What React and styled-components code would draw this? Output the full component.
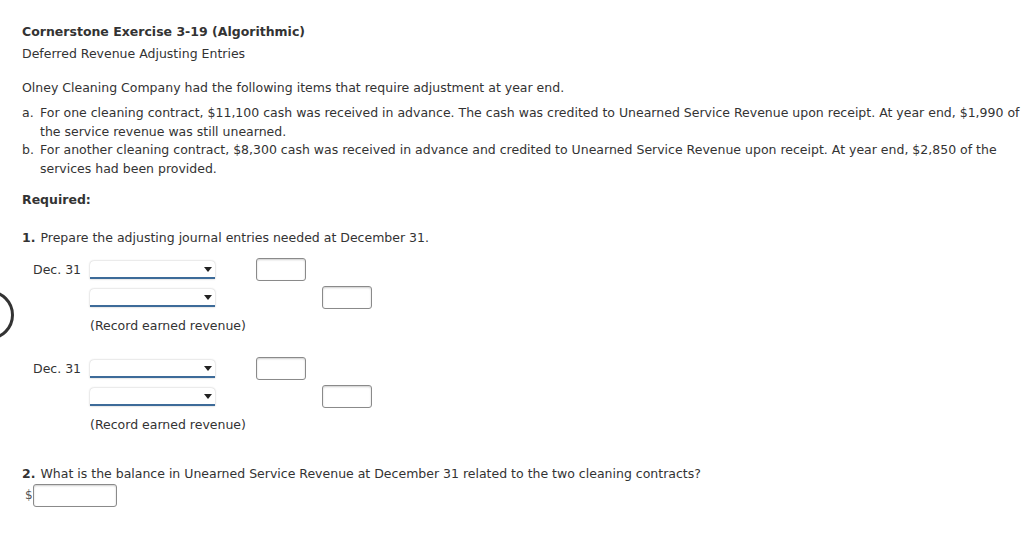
import React from 'react'
import styled, { createGlobalStyle } from 'styled-components'

const Global = createGlobalStyle`
  html, body {
    margin: 0;
    padding: 0;
    background: #fff;
  }
  body {
    font-family: Verdana, "DejaVu Sans", sans-serif;
    font-size: 12.5px;
    color: #333;
  }
`

const Page = styled.div`
  position: relative;
  width: 1024px;
  height: 541px;
  overflow: hidden;
  padding: 23px 0 0 22px;
  box-sizing: border-box;
`

const SideHandle = styled.div`
  position: absolute;
  left: -36px;
  top: 290px;
  width: 44px;
  height: 44px;
  border: 3px solid #333;
  border-radius: 50%;
`

const Title = styled.div`
  font-weight: bold;
  line-height: 18px;
`

const Subtitle = styled.div`
  line-height: 18px;
  margin-top: 4px;
`

const Para = styled.p`
  margin: 16px 0 0;
  line-height: 18px;
`

const List = styled.ol`
  list-style: none;
  margin: 7px 0 0;
  padding: 0;
  width: 1000px;
`

const Item = styled.li`
  display: flex;
  line-height: 18.7px;
`

const Marker = styled.span`
  flex: 0 0 18px;
`

const Body = styled.span`
  flex: 1;
`

const Required = styled.div`
  font-weight: bold;
  margin-top: 12px;
  line-height: 18px;
`

const Question = styled.div`
  margin-top: ${p => p.$top}px;
  line-height: 18px;
  b { margin-right: 5px; }
`

const Journal = styled.div`
  margin: ${p => p.$top}px 0 0 11px;
  display: grid;
  grid-template-columns: 57px 125px 41px 50px 16px 50px;
  grid-auto-rows: 28px;
  align-items: center;
`

const DateLabel = styled.span`
  grid-column: 1;
`

const SelectBox = styled.div`
  grid-column: 2;
  position: relative;
  height: 16px;
  background: #fff;
  border-radius: 4px 4px 0 0;
  box-shadow: 0 0 2px rgba(0, 0, 0, 0.3);
  border-bottom: 2px solid #3d6b99;
  &::after {
    content: '';
    position: absolute;
    right: 3px;
    top: 6px;
    border-left: 4px solid transparent;
    border-right: 4px solid transparent;
    border-top: 5px solid #222;
  }
`

const Amount = styled.div`
  grid-column: ${p => p.$col};
  width: ${p => p.$w || 50}px;
  height: 23px;
  box-sizing: border-box;
  border: 1px solid #8a8a8a;
  border-radius: 3px;
  box-shadow: inset 0 1px 2px rgba(0, 0, 0, 0.2);
  background: #fff;
`

const Note = styled.span`
  grid-column: 2 / span 5;
`

const DollarRow = styled.div`
  display: flex;
  align-items: center;
  margin: 1px 0 0 3px;
`

const Dollar = styled.span`
  width: 8px;
  font-size: 12px;
  color: #555;
`

const Entry = ({ top }) => (
  <Journal $top={top}>
    <DateLabel>Dec. 31</DateLabel>
    <SelectBox />
    <span />
    <Amount $col={4} />
    <span />
    <span />
    <span />
    <SelectBox />
    <span />
    <span />
    <span />
    <Amount $col={6} />
    <span />
    <Note>(Record earned revenue)</Note>
  </Journal>
)

export default function App () {
  return (
    <Page>
      <Global />
      <SideHandle />
      <Title>Cornerstone Exercise 3-19 (Algorithmic)</Title>
      <Subtitle>Deferred Revenue Adjusting Entries</Subtitle>
      <Para>Olney Cleaning Company had the following items that require adjustment at year end.</Para>
      <List>
        <Item>
          <Marker>a.</Marker>
          <Body>For one cleaning contract, $11,100 cash was received in advance. The cash was credited to Unearned Service Revenue upon receipt. At year end, $1,990 of the service revenue was still unearned.</Body>
        </Item>
        <Item>
          <Marker>b.</Marker>
          <Body>For another cleaning contract, $8,300 cash was received in advance and credited to Unearned Service Revenue upon receipt. At year end, $2,850 of the services had been provided.</Body>
        </Item>
      </List>
      <Required>Required:</Required>
      <Question $top={20}><b>1.</b>Prepare the adjusting journal entries needed at December 31.</Question>
      <Entry top={9} />
      <Entry top={15} />
      <Question $top={26}><b>2.</b>What is the balance in Unearned Service Revenue at December 31 related to the two cleaning contracts?</Question>
      <DollarRow>
        <Dollar>$</Dollar>
        <Amount $w={84} />
      </DollarRow>
    </Page>
  )
}
